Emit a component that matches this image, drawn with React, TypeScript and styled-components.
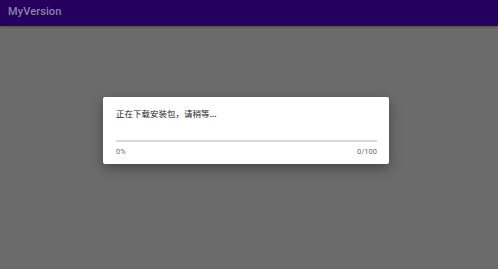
import * as React from 'react'
import styled, { createGlobalStyle } from 'styled-components'

const GlobalStyle = createGlobalStyle`
  html, body {
    margin: 0;
    padding: 0;
    background: #6b6b6b;
  }
  body {
    font-family: Roboto, "Noto Sans CJK SC", sans-serif;
  }
`
const Screen = styled.div`
  width: 498px;
  height: 269px;
  display: flex;
  flex-direction: column;
  background: #6b6b6b;
  overflow: hidden;
`
const Toolbar = styled.header`
  height: 26px;
  box-sizing: border-box;
  flex-shrink: 0;
  display: flex;
  align-items: center;
  padding: 0 8px 4px;
  background: #25005f;
  box-shadow: 0 1px 2px rgba(0, 0, 0, 0.3);
`
const Title = styled.span`
  color: #8c84a4;
  font-size: 11px;
  font-weight: 500;
  letter-spacing: 0.1px;
`
const Body = styled.main`
  flex-grow: 1;
  display: flex;
  justify-content: center;
  padding-top: 71px;
`
const Dialog = styled.div`
  width: 286px;
  height: 67px;
  box-sizing: border-box;
  margin-left: -6px;
  background: #ffffff;
  border-radius: 2px;
  box-shadow: 0 4px 12px rgba(0, 0, 0, 0.35);
  padding: 10px 12px 0 13px;
  display: flex;
  flex-direction: column;
`
const Message = styled.div`
  font-family: "Noto Sans CJK SC", Roboto, sans-serif;
  color: #222222;
  font-size: 8.5px;
  line-height: 12px;
`
const Track = styled.div`
  margin-top: 21px;
  height: 2px;
  background: #d9d9d9;
`
const Labels = styled.div`
  display: flex;
  justify-content: space-between;
  margin-top: 5px;
  color: #6d6d6d;
  font-size: 7.5px;
  line-height: 10px;
`

export default function App() {
  return (
    <Screen>
      <GlobalStyle />
      <Toolbar>
        <Title>MyVersion</Title>
      </Toolbar>
      <Body>
        <Dialog>
          <Message>正在下载安装包，请稍等...</Message>
          <Track />
          <Labels>
            <span>0%</span>
            <span>0/100</span>
          </Labels>
        </Dialog>
      </Body>
    </Screen>
  )
}
